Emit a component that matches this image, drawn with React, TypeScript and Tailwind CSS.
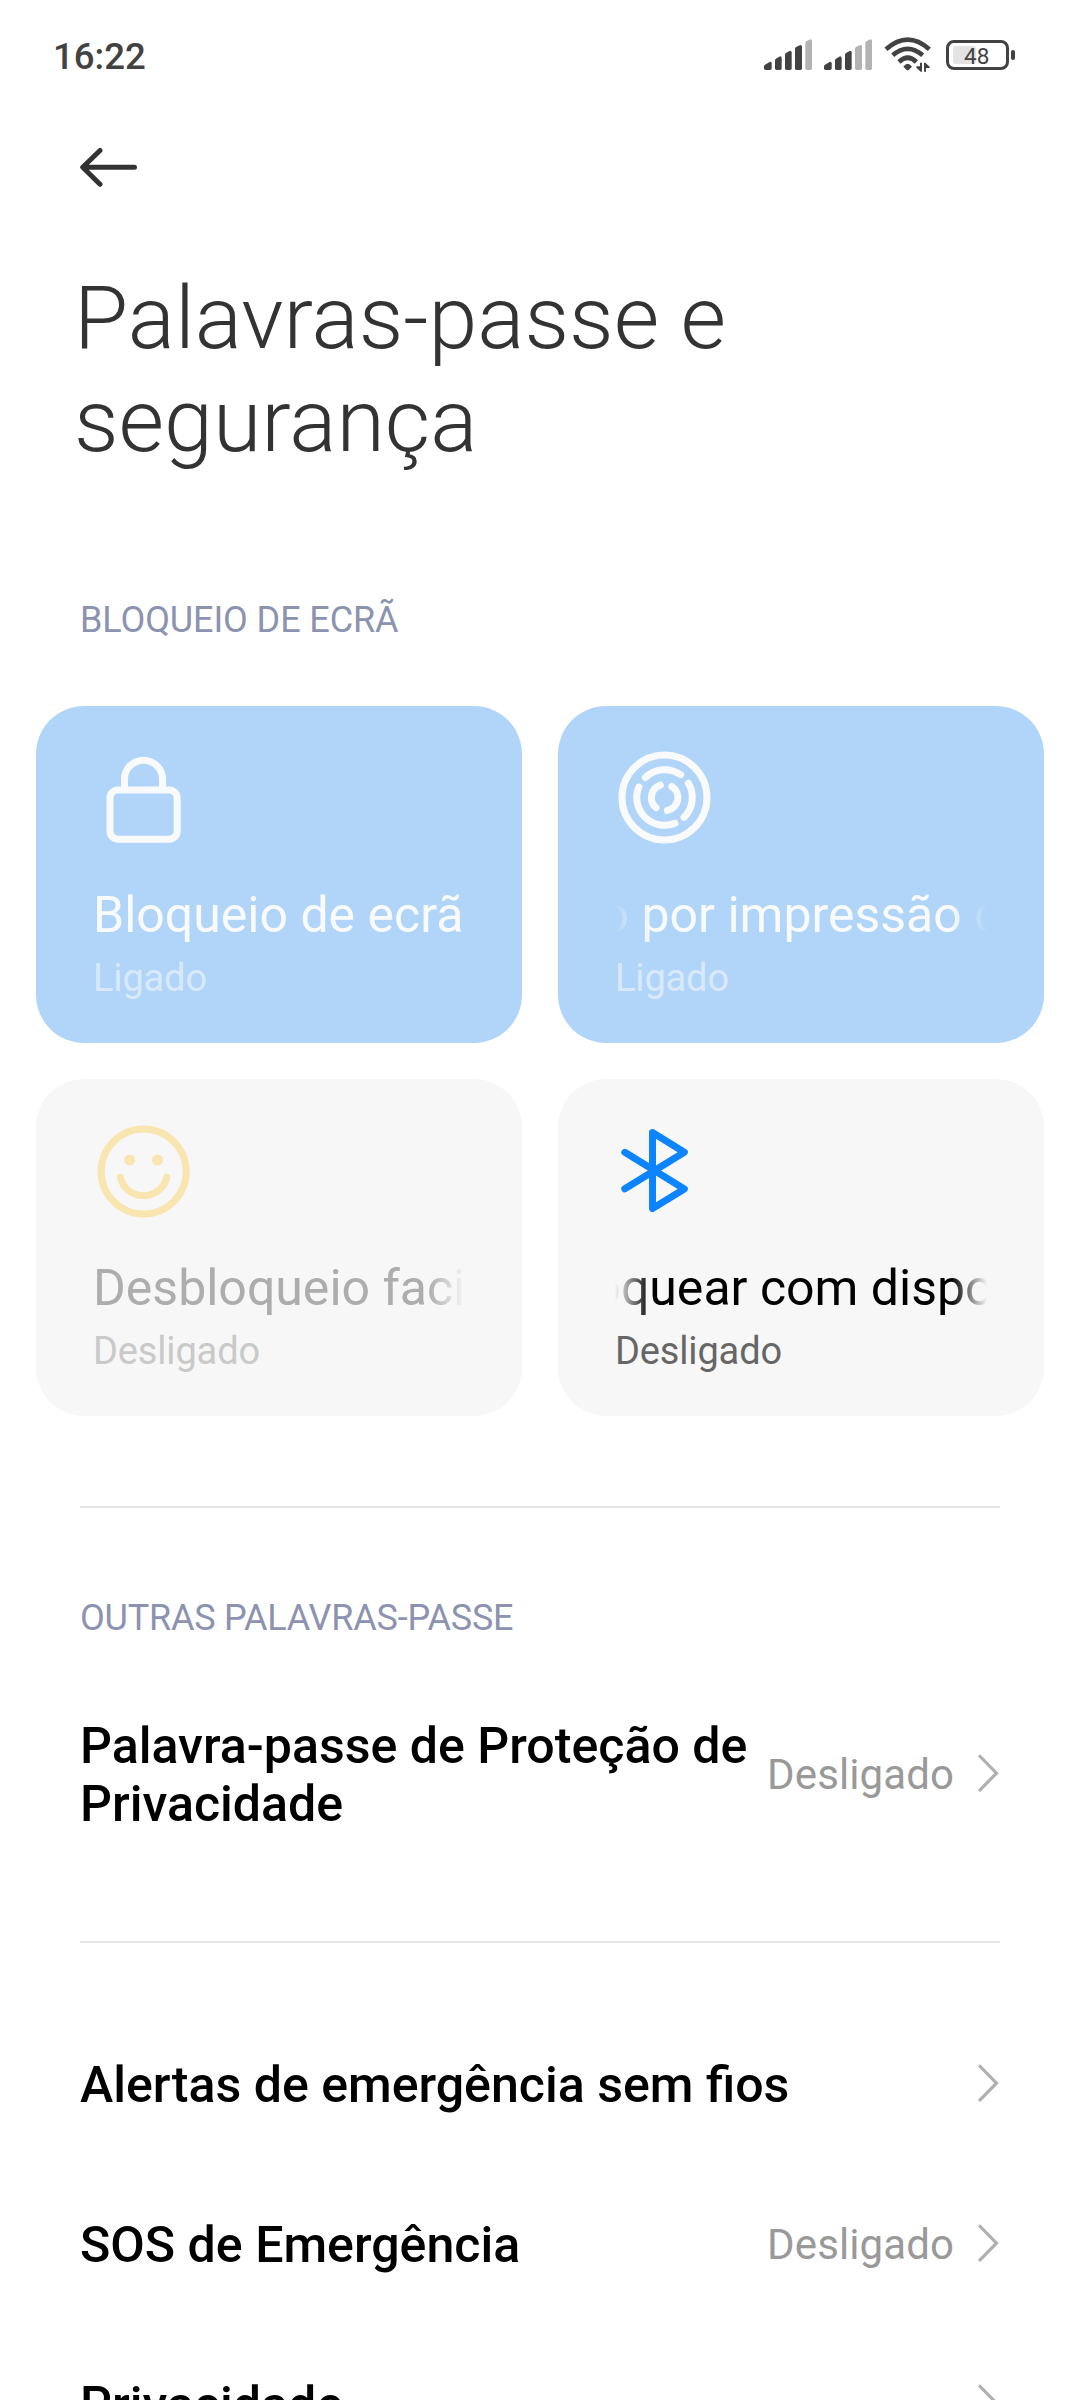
import type { ReactNode } from "react";

const INK = "#424242";

function Signal({ level }: { level: number }) {
  const bars = [
    "M72 145v-6q0-3 3-5l15-9q5 0 5 5v15q0 5-5 5h-13q-5 0-5-5z",
    "M105 145v-24q0-3 3-5l12-7q5 0 5 5v31q0 5-5 5h-10q-5 0-5-5z",
    "M135 145v-41q0-3 3-5l12-7q5 0 5 5v48q0 5-5 5h-10q-5 0-5-5z",
    "M165 145v-59q0-3 3-5l13-6q5 0 5 5v65q0 5-5 5h-11q-5 0-5-5z",
    "M196 145v-76q0-3 3-5l12-6q5 0 5 5v82q0 5-5 5h-10q-5 0-5-5z",
  ];
  return (
    <svg width="48" height="31" viewBox="72 57 144 93">
      {bars.map((d, i) => (
        <path key={d} d={d} fill={i < level ? INK : "#b3b3b3"} />
      ))}
    </svg>
  );
}

function Wifi() {
  return (
    <svg width="48" height="37" viewBox="432 49 144 111" fill="none" stroke={INK} strokeWidth="14">
      <path d="M438 89Q503 31 568 89" />
      <path d="M458 107Q503 68 548 107" />
      <path d="M477 127Q503 102 529 127" />
      <path d="M490 141Q503 124 516 141L506 151Q503 153 500 151Z" fill={INK} stroke="none" />
      <path
        d="M540 129h6v27h-4l-13-12v-4h11zM552 129h4l13 12v4h-11v11h-6z"
        fill={INK}
        stroke="none"
      />
    </svg>
  );
}

function Battery() {
  return (
    <div className="ml-[2px] flex h-[30px] w-[69px] items-center">
      <div className="flex h-[30px] w-[63px] items-center rounded-[8px] border-[3px] border-[#424242] p-[4px]">
        <div className="flex h-[18px] w-[23px] items-center rounded-[3px] bg-[#e3e3e3] pt-[2px] pl-[11px]">
          <span className="text-[22.5px] leading-[22px] text-[#424242]">48</span>
        </div>
      </div>
      <div className="ml-[2px] h-[10px] w-[4px] rounded-[2px] bg-[#424242]" />
    </div>
  );
}

function LockIcon() {
  return (
    <svg width="100" height="100" viewBox="189 174 300 300" fill="none" stroke="#f9fafb" strokeWidth="21">
      <rect x="240" y="300" width="201.500" height="147.500" rx="24" />
      <path d="M283.500 298V267.500a57 56.500 0 0 1 114 0V298" />
    </svg>
  );
}

function FingerprintIcon() {
  return (
    <svg
      width="100"
      height="100"
      viewBox="225 174 300 300"
      fill="none"
      stroke="#f9fafb"
      strokeWidth="21"
      strokeLinecap="round"
    >
      <circle cx="373.500" cy="322.500" r="127.500" />
      <path d="M316 262.500A83.500 83.500 0 0 1 422 254" />
      <path d="M445 279.500A83.500 83.500 0 0 1 432 382" />
      <path d="M296.500 291A83.500 83.500 0 0 0 405 400" />
      <path d="M361 285.500A39.500 39.500 0 0 0 348 353" />
      <path d="M395.500 289.500A39.500 39.500 0 0 1 382 361.500" />
    </svg>
  );
}

function FaceIcon() {
  return (
    <svg
      width="100"
      height="100"
      viewBox="189 183 300 300"
      fill="none"
      stroke="#f9e5af"
      strokeWidth="21"
      strokeLinecap="round"
    >
      <circle cx="341" cy="334.500" r="127.500" />
      <circle cx="299" cy="300" r="16.500" fill="#f9e5af" stroke="none" />
      <circle cx="382.500" cy="300" r="16.500" fill="#f9e5af" stroke="none" />
      <path d="M271 351.500A71.500 71.500 0 0 0 410.500 351.500" />
    </svg>
  );
}

function BluetoothIcon() {
  return (
    <svg
      width="100"
      height="100"
      viewBox="225 183 300 300"
      fill="none"
      stroke="#0d84ff"
      strokeWidth="21"
      strokeLinecap="round"
      strokeLinejoin="round"
    >
      <path d="M254.500 277L433 387L337.500 445.500V217.500L433 276.500L254.500 386.500" />
    </svg>
  );
}

function Chevron() {
  return (
    <svg
      width="22"
      height="38"
      viewBox="0 0 22 38"
      fill="none"
      stroke="#b0b0b0"
      strokeWidth="3.200"
      className="mb-[5px] shrink-0"
    >
      <path d="M1 1.300L18.500 19.200L1 37" />
    </svg>
  );
}

type CardProps = {
  icon: ReactNode;
  title: string;
  state: string;
  card: string;
  titleStyle: string;
  mask?: string;
  stateStyle: string;
};

function Card({ icon, title, state, card, titleStyle, mask = "", stateStyle }: CardProps) {
  return (
    <div className={`flex h-[337px] flex-col rounded-[48px] px-[57px] pt-[42px] ${card}`}>
      {icon}
      <div className={`mt-[37px] overflow-hidden ${mask}`}>
        <div className={`text-[50px] leading-[60px] whitespace-nowrap ${titleStyle}`}>{title}</div>
      </div>
      <div className={`mt-[11px] text-[38px] leading-[44px] tracking-[-0.15px] ${stateStyle}`}>{state}</div>
    </div>
  );
}

function Row({ label, value }: { label: string; value?: string }) {
  return (
    <div className="flex h-[160px] items-center justify-between">
      <span className="text-[50.1px] leading-[58px] font-medium text-black">{label}</span>
      <span className="flex items-center gap-[24px]">
        {value && <span className="text-[42px] leading-[50px] tracking-[0.1px] text-[#999999]">{value}</span>}
        <Chevron />
      </span>
    </div>
  );
}

export default function App() {
  return (
    <div className="flex h-[2400px] w-[1080px] flex-col overflow-hidden bg-white font-['Roboto',sans-serif]">
      <header className="flex h-[109px] shrink-0 items-center justify-between pr-[65px] pl-[53px]">
        <span className="mt-[4px] text-[36.6px] leading-[42px] font-medium text-[#424242]">16:22</span>
        <div className="flex items-center gap-[12px]">
          <Signal level={4} />
          <Signal level={3} />
          <Wifi />
          <Battery />
        </div>
      </header>

      <svg
        className="mt-[38px] ml-[80px] shrink-0"
        width="58"
        height="40"
        viewBox="0 0 58 40"
        fill="none"
        stroke="#333333"
        strokeWidth="5"
        strokeLinecap="round"
        strokeLinejoin="round"
      >
        <path d="M20 3.500L2.700 20.300L20 37.200M3 20.300H54.500" />
      </svg>

      <h1 className="mt-[79px] ml-[74px] w-[800px] text-[88px] leading-[103px] font-light text-[#333333]">
        Palavras-passe e<br />
        segurança
      </h1>

      <h2 className="mt-[127px] ml-[80px] text-[36px] leading-[42px] tracking-[-0.1px] text-[#8c93b0]">
        BLOQUEIO DE ECRÃ
      </h2>

      <section className="mt-[65px] grid grid-cols-2 gap-[36px] px-[36px]">
        <Card
          icon={<LockIcon />}
          title="Bloqueio de ecrã"
          state="Ligado"
          card="bg-[#b1d5f8]"
          titleStyle="text-[#f9fafb]"
          stateStyle="text-[#d9e9fb]"
        />
        <Card
          icon={<FingerprintIcon />}
          title="Desbloqueio por impressão digital"
          state="Ligado"
          card="bg-[#b1d5f8]"
          titleStyle="text-[#f9fafb] ml-[-263px]"
          mask="[mask-image:linear-gradient(to_right,transparent,black_36px,black_336px,transparent)]"
          stateStyle="text-[#d9e9fb]"
        />
        <Card
          icon={<FaceIcon />}
          title="Desbloqueio facial"
          state="Desligado"
          card="bg-[#f7f7f7]"
          titleStyle="text-[#adadad]"
          mask="[mask-image:linear-gradient(to_right,black_336px,transparent)]"
          stateStyle="text-[#c9c9c9]"
        />
        <Card
          icon={<BluetoothIcon />}
          title="Desbloquear com dispositivo Bluetooth"
          state="Desligado"
          card="bg-[#f7f7f7]"
          titleStyle="text-black ml-[-148px]"
          mask="[mask-image:linear-gradient(to_right,transparent,black_36px,black_336px,transparent)]"
          stateStyle="text-[#666666]"
        />
      </section>

      <main className="flex flex-col px-[80px]">
        <div className="mt-[90px] h-[2px] bg-[#e5e5e5]" />
        <h2 className="mt-[89px] text-[36px] leading-[42px] tracking-[-0.22px] text-[#8c93b0]">
          OUTRAS PALAVRAS-PASSE
        </h2>
        <div className="mt-[78px] flex h-[116px] items-center justify-between">
          <span className="text-[50.1px] leading-[58px] font-medium text-black">
            Palavra-passe de Proteção de
            <br />
            Privacidade
          </span>
          <span className="flex items-center gap-[24px]">
            <span className="text-[42px] leading-[50px] tracking-[0.1px] text-[#999999]">Desligado</span>
            <Chevron />
          </span>
        </div>
        <div className="mt-[108px] mb-[62px] h-[2px] bg-[#e5e5e5]" />
        <Row label="Alertas de emergência sem fios" />
        <Row label="SOS de Emergência" value="Desligado" />
        <Row label="Privacidade" />
      </main>
    </div>
  );
}
